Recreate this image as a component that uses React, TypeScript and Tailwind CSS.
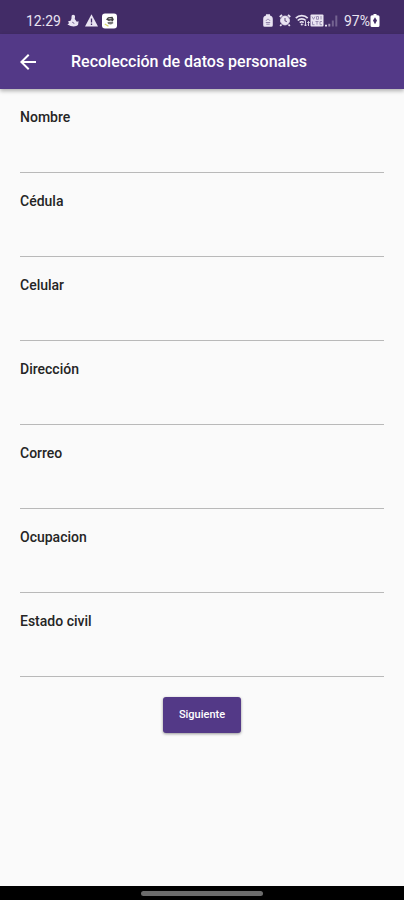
import { useState } from 'react'

const FIELDS = [
  { id: 'nombre', label: 'Nombre', type: 'text' },
  { id: 'cedula', label: 'Cédula', type: 'text' },
  { id: 'celular', label: 'Celular', type: 'tel' },
  { id: 'direccion', label: 'Dirección', type: 'text' },
  { id: 'correo', label: 'Correo', type: 'email' },
  { id: 'ocupacion', label: 'Ocupacion', type: 'text' },
  { id: 'estado', label: 'Estado civil', type: 'text' },
]

function StatusBar() {
  return (
    <div className="flex h-[34px] items-center justify-between bg-[#422c67] pt-[7px] pr-6 pl-[26px] text-sm leading-5 text-[#e9e4f2]">
      <div className="flex items-center gap-1.5">
        <span>12:29</span>
        <svg width="12" height="13" viewBox="0 0 12 14" fill="currentColor">
          <path d="M4.500 2C5.500.2 8.300.8 8.200 3L7.900 5.500l2.200 2.800 1.900-.6-.5 4C10 13.700 6 13.800 3.500 13L0 11.400l1.700-1.500-1-2 2.700-.5L4.300 5z" />
          <path d="M5.200 8.800l2.200 1.400" stroke="#422c67" strokeWidth="0.800" />
        </svg>
        <svg width="13" height="13" viewBox="0 0 13 13" fill="currentColor">
          <path d="M6.500.3L13 12.500H0z" />
          <path d="M6.500 4.500v4M6.500 9.500v1.400" stroke="#422c67" strokeWidth="1.300" />
        </svg>
        <svg className="-ml-0.5" width="15" height="16" viewBox="0 0 15 16">
          <rect x="0" y="0.500" width="15" height="15" rx="3" fill="#fff" />
          <path d="M4 6.500l2-2.300 4.500-.4 1.300 2.700-1 1.700-2-.8-2 .7z" fill="#3f3f3f" />
          <path d="M5.500 9l5.500-.6.3 1.900-2.300 1.200-3-.5z" fill="#777" />
          <path d="M2.800 11l3.700 2.300" stroke="#d8d96a" strokeWidth="1.300" />
          <path d="M6.500 5.700h3" stroke="#fff" strokeWidth="0.700" />
        </svg>
      </div>

      <div className="flex items-center">
        {/* Battery saver */}
        <svg className="mr-1.5" width="10" height="13" viewBox="0 0 10 13" fill="currentColor">
          <path d="M3 .3h4V1.500C9 2 9.800 3.200 9.800 5v6.200q0 1.500-1.500 1.500H1.700Q.2 12.700.2 11.200V5C.2 3.200 1 2 3 1.500z" />
          <path d="M3 6.800c1-2 3-2 4 0M2.800 8.500h4.400M3.300 10.200h3.400" stroke="#8778a2" strokeWidth="0.900" fill="none" />
        </svg>
        <svg className="mr-1" width="12" height="13" viewBox="0 0 12 13" fill="none" stroke="currentColor">
          <circle cx="6" cy="6.500" r="4.400" fill="currentColor" />
          <path d="M.8 3L3 .9M11.200 3L9 .9M2.500 10.500L1.200 12M9.500 10.500l1.300 1.500" strokeWidth="1.800" />
          <path d="M6 4v2.800l1.800 1" stroke="#6a5788" strokeWidth="1.100" />
        </svg>
        <svg width="15" height="13" viewBox="0 0 15 13" fill="none" stroke="currentColor">
          <path d="M.8 4.200C4 .8 9.500.8 12.700 4.200M2.800 6.500c2.200-2.300 5.700-2.300 7.900 0M4.800 8.700c1.200-1.300 2.700-1.300 3.900 0" strokeWidth="1.700" />
          <circle cx="6.800" cy="10.500" r="1.100" fill="currentColor" stroke="none" />
          <path d="M10.500 7v5M9 10.500l1.500 1.500 1.500-1.500M13.500 12V7.500M12.300 9l1.200-1.500L14.700 9" strokeWidth="0.900" />
        </svg>
        {/* VoLTE */}
        <svg width="14" height="13" viewBox="0 0 14 13">
          <rect x="0.500" y="0.500" width="13" height="12" rx="1" fill="currentColor" />
          <path d="M2 2.500l1.500 2.800L5 2.500M6.500 2.500h2v2.800h-2zM11 2v3.500M2.500 7.500v3.200h2M5.500 7.500h3M7 7.500v3.200M12 7.500h-2v3.200h2" fill="none" stroke="#9184ab" strokeWidth="0.900" />
        </svg>
        <svg className="mr-1.5" width="14" height="13" viewBox="0 0 14 13" fill="currentColor">
          <path d="M1 10.800h2v1.700H1z" />
          <path d="M4.300 9.800h2v2.700h-2z" opacity="0.600" />
          <path d="M7.800 6.500h2v6h-2z" opacity="0.300" />
          <path d="M11.300 1.500h2v11h-2z" opacity="0.300" />
        </svg>
        <span>97%</span>
        <svg width="10" height="13" viewBox="0 0 10 13">
          <path d="M3.500 0h3v1.200H8q1.500 0 1.500 1.500v8.800Q9.500 13 8 13H2Q.5 13 .5 11.500V2.700Q.5 1.200 2 1.200h1.500z" fill="#fff" />
          <path d="M5 3.300L7 6.500 5 10.300 3 6.500z" fill="#422c67" />
        </svg>
      </div>
    </div>
  )
}

export default function App() {
  const [values, setValues] = useState<Record<string, string>>({})

  return (
    <div className="flex min-h-screen flex-col bg-[#fafafa] font-['Roboto',sans-serif]">
      <StatusBar />

      <header className="flex h-[55px] items-center bg-[#533987] pl-4 text-white shadow-[0_2px_4px_rgba(0,0,0,0.3)]">
        <button type="button" aria-label="Atrás" className="mr-[31px]">
          <svg width="24" height="24" viewBox="0 0 24 24" fill="currentColor">
            <path d="M20 11H7.830l5.590-5.590L12 4l-8 8 8 8 1.410-1.410L7.830 13H20z" />
          </svg>
        </button>
        <h1 className="text-base font-medium">Recolección de datos personales</h1>
      </header>

      <form className="flex flex-1 flex-col px-5" onSubmit={(e) => e.preventDefault()}>
        {FIELDS.map((field) => (
          <div key={field.id} className="flex h-[84px] flex-col border-b border-[#b9b9b9] pt-[18px]">
            <label htmlFor={field.id} className="text-sm leading-5 font-medium text-[#252525]">
              {field.label}
            </label>
            <input
              id={field.id}
              type={field.type}
              value={values[field.id] ?? ''}
              onChange={(e) => setValues({ ...values, [field.id]: e.target.value })}
              className="w-full flex-1 bg-transparent text-base text-[#252525] outline-none"
            />
          </div>
        ))}

        <button
          type="submit"
          className="mt-5 self-center rounded-[3px] bg-[#533987] px-4 py-2.5 text-[11px] leading-4 font-medium text-white shadow-[0_1px_3px_rgba(0,0,0,0.4)]"
        >
          Siguiente
        </button>
      </form>

      {/* Gesture bar */}
      <div className="flex h-[14px] items-center justify-center bg-black">
        <div className="h-[5px] w-[122px] rounded-full bg-[#6b6b6b]" />
      </div>
    </div>
  )
}
